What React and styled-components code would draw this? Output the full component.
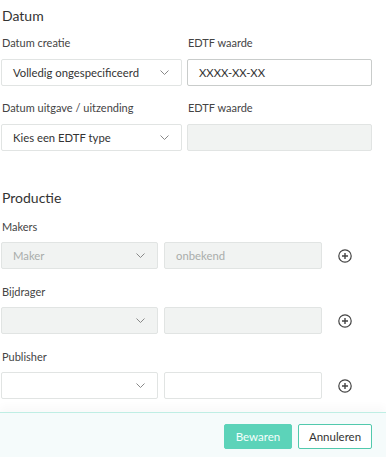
import React from 'react'
import styled, { createGlobalStyle } from 'styled-components'

const GlobalStyle = createGlobalStyle`
  body {
    margin: 0;
    background: #fff;
    font-family: Lato, 'Noto Sans', sans-serif;
    color: #333;
  }
`

const Page = styled.div`
  width: 386px;
  height: 457px;
  display: flex;
  flex-direction: column;
  overflow: hidden;
`
const Body = styled.div`
  flex: 1;
  padding: 0 14px 0 1px;
`
const Section = styled.section`
  margin-top: ${(props) => props.$top || 0}px;
`
const Heading = styled.h3`
  margin: 0;
  padding: ${(props) => props.$pt ?? 7}px 0 0 1px;
  height: 34px;
  box-sizing: border-box;
  font-size: 14px;
  font-weight: 400;
  color: #333;
`
const Grid = styled.div`
  display: grid;
  grid-template-columns: ${(props) => props.$cols};
  column-gap: ${(props) => props.$colGap}px;
  align-items: center;
`
const Label = styled.label`
  display: block;
  box-sizing: border-box;
  height: ${(props) => props.$h || 25}px;
  padding: 2px 0 0 1px;
  font-size: 11px;
  line-height: 14px;
  color: #444;
`
const Field = styled.div`
  margin-bottom: ${(props) => props.$mb}px;
`
const Box = styled.div`
  box-sizing: border-box;
  height: 27px;
  display: flex;
  align-items: center;
  justify-content: space-between;
  padding: 0 12px 0 11px;
  border: 1px solid ${(props) => (props.$strong ? '#c9cccb' : '#e1e4e3')};
  border-radius: 2px;
  background: ${(props) => (props.$disabled ? '#f1f3f2' : '#fff')};
  font-size: 11.3px;
  color: ${(props) => (props.$muted ? '#a9adab' : '#333')};
`
const Chevron = () => (
  <svg width="9" height="5" viewBox="0 0 9 5" fill="none">
    <path d="M0.5 0.5 L4.5 4.5 L8.5 0.5" stroke="#888" strokeWidth="1" />
  </svg>
)
const AddButton = styled.span`
  display: flex;
  justify-content: center;
  align-items: center;
`
const PlusIcon = () => (
  <svg width="14" height="14" viewBox="0 0 14 14" fill="none">
    <circle cx="7" cy="7" r="6.2" stroke="#444" strokeWidth="1.2" />
    <path d="M7 4 V10 M4 7 H10" stroke="#444" strokeWidth="1.4" />
  </svg>
)
const Footer = styled.footer`
  height: 45px;
  box-sizing: border-box;
  border-top: 1px solid #bfeee4;
  background: #f5fbfb;
  box-shadow: 0 -6px 8px rgba(0, 0, 0, 0.025);
  display: flex;
  justify-content: flex-end;
  align-items: flex-start;
  gap: 6px;
  padding: 11px 14px 0 0;
`
const Button = styled.button`
  height: 25px;
  box-sizing: border-box;
  padding: 0;
  width: ${(props) => props.$w}px;
  border-radius: 2px;
  font-family: inherit;
  font-size: 11.5px;
  border: 1px solid ${(props) => (props.$primary ? '#5cd3b9' : '#52c9ad')};
  background: ${(props) => (props.$primary ? '#5cd3b9' : '#fff')};
  color: ${(props) => (props.$primary ? '#f4fffc' : '#333')};
`

function SelectBox({ value, disabled, muted }) {
  return (
    <Box $disabled={disabled} $muted={muted}>
      <span>{value}</span>
      <Chevron />
    </Box>
  )
}

function PersonRow({ label, disabled, role, name, mb }) {
  return (
    <Field $mb={mb}>
      <Label $h={24}>{label}</Label>
      <Grid $cols="157px 158px 34px" $colGap={6}>
        <SelectBox value={role} disabled={disabled} muted />
        <Box $disabled={disabled} $muted>
          {name}
        </Box>
        <AddButton>
          <PlusIcon />
        </AddButton>
      </Grid>
    </Field>
  )
}

export default function App() {
  return (
    <Page>
      <GlobalStyle />
      <Body>
        <Section>
          <Heading>Datum</Heading>
          <Field $mb={13}>
            <Grid $cols="181px 185px" $colGap={5}>
              <Label>Datum creatie</Label>
              <Label>EDTF waarde</Label>
              <SelectBox value="Volledig ongespecificeerd" />
              <Box $strong>XXXX-XX-XX</Box>
            </Grid>
          </Field>
          <Field $mb={0}>
            <Grid $cols="181px 185px" $colGap={5}>
              <Label>Datum uitgave / uitzending</Label>
              <Label>EDTF waarde</Label>
              <SelectBox value="Kies een EDTF type" />
              <Box $disabled />
            </Grid>
          </Field>
        </Section>
        <Section $top={33}>
          <Heading $pt={5}>Productie</Heading>
          <PersonRow label="Makers" role="Maker" name="onbekend" disabled mb={14} />
          <PersonRow label="Bijdrager" disabled mb={14} />
          <PersonRow label="Publisher" mb={0} />
        </Section>
      </Body>
      <Footer>
        <Button $primary $w={68}>Bewaren</Button>
        <Button $w={74}>Annuleren</Button>
      </Footer>
    </Page>
  )
}
